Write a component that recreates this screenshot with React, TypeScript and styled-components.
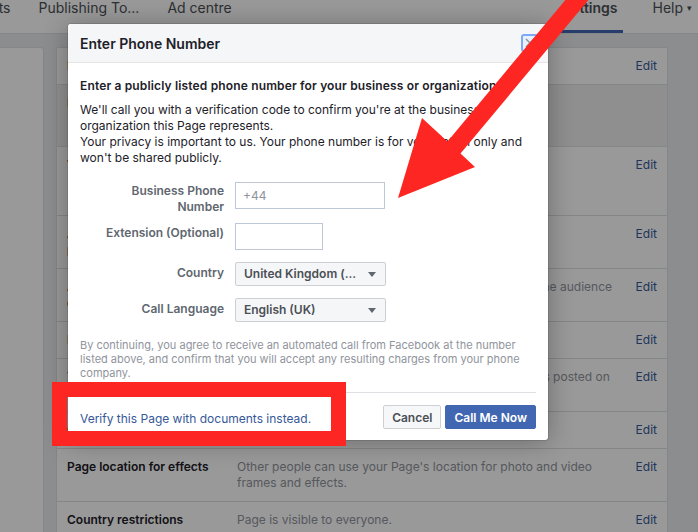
import styled, { createGlobalStyle } from 'styled-components';

const GlobalStyle = createGlobalStyle`
  * {
    box-sizing: border-box;
  }
  body {
    margin: 0;
    background: #e9ebee;
    font-family: Inter, 'Liberation Sans', Arial, sans-serif;
    color: #1d2129;
    overflow: hidden;
  }
`;

const sideItems = [
  'General',
  'Messaging',
  'Page info',
  'Templates',
  'Notifications',
  'Advanced',
  'Page roles',
  'People',
  'Audience',
  'Authorisations',
  'Branded content',
  'Instagram',
];

type Setting = {
  label: string;
  desc: string[];
  edit: boolean;
  shaded?: boolean;
  minH?: number;
};

// each desc entry is one line, as the page shows it
const settings: Setting[] = [
  { label: 'Page Visibility', desc: ['Page published'], edit: true },
  {
    label: 'Page Verification',
    desc: ['Page is not verified'],
    edit: false,
    shaded: true,
    minH: 62,
  },
  {
    label: 'Visitor posts',
    desc: [
      'Anyone can publish to the Page.',
      'Anyone can add photos and videos to the Page.',
      'Review posts by others before they are shown.',
    ],
    edit: true,
  },
  {
    label: 'Audience optimisation for posts',
    desc: ['The ability to select News Feed targeting', 'and publishing options is turned off.'],
    edit: true,
  },
  {
    label: 'Ads about social issues, elections or politics',
    desc: ['Choose if people who manage this Page can change the audience', 'for these ads.'],
    edit: true,
  },
  { label: 'Messages', desc: ['People can contact my Page privately.'], edit: true },
  {
    label: 'Tagging ability',
    desc: ['Only people who help manage my Page can tag photos posted on', 'it.'],
    edit: true,
  },
  {
    label: 'Others tagging this Page',
    desc: ['People and other Pages can tag my Page.'],
    edit: true,
  },
  {
    label: 'Page location for effects',
    desc: ["Other people can use your Page's location for photo and video", 'frames and effects.'],
    edit: true,
  },
  { label: 'Country restrictions', desc: ['Page is visible to everyone.'], edit: true },
];

const App = (): JSX.Element => {
  return (
    <>
      <GlobalStyle />
      <Page>
        <NavBar>
          <NavGroup>
            <NavTab>Insights</NavTab>
            <NavTab>Publishing To...</NavTab>
            <NavTab>Ad centre</NavTab>
          </NavGroup>
          <NavRight>
            <NavTab $active>Settings</NavTab>
            <NavTab>
              Help <Caret>▾</Caret>
            </NavTab>
          </NavRight>
        </NavBar>

        <Content>
          <SideCard>
            {sideItems.map((item) => (
              <SideItem key={item}>{item}</SideItem>
            ))}
          </SideCard>
          <MainCard>
            {settings.map((s) => (
              <SettingRow key={s.label} $shaded={s.shaded} $minH={s.minH}>
                <RowLabel>{s.label}</RowLabel>
                <RowDesc>
                  {s.desc.map((line) => (
                    <DescLine key={line}>{line}</DescLine>
                  ))}
                </RowDesc>
                <RowEdit>{s.edit ? 'Edit' : ''}</RowEdit>
              </SettingRow>
            ))}
          </MainCard>
        </Content>

        <Overlay />

        <Modal>
          <ModalHeader>
            <ModalTitle>Enter Phone Number</ModalTitle>
            <CloseBtn aria-label="Close">
              <svg width="10" height="10" viewBox="0 0 10 10">
                <path d="M1 1L9 9M9 1L1 9" stroke="#90949c" strokeWidth="1.6" />
              </svg>
            </CloseBtn>
          </ModalHeader>
          <ModalBody>
            <Intro>Enter a publicly listed phone number for your business or organization.</Intro>
            <Para>
              We'll call you with a verification code to confirm you're at the business or
              <br />
              organization this Page represents.
              <br />
              Your privacy is important to us. Your phone number is for verification only and
              <br />
              won't be shared publicly.
            </Para>

            <Form>
              <FieldLabel $top={1}>
                Business Phone
                <br />
                Number
              </FieldLabel>
              <TextInput $width={150} placeholder="+44" />

              <FieldLabel $top={2}>Extension (Optional)</FieldLabel>
              <TextInput $width={88} />

              <FieldLabel $top={7}>Country</FieldLabel>
              <SelectBox>
                United Kingdom (...
                <Arrow />
              </SelectBox>

              <FieldLabel $top={7}>Call Language</FieldLabel>
              <SelectBox>
                English (UK)
                <Arrow />
              </SelectBox>
            </Form>

            <Disclaimer>
              By continuing, you agree to receive an automated call from Facebook at the number
              listed above, and confirm that you will accept any resulting charges from your phone
              company.
            </Disclaimer>

            <Footer>
              <DocLink href="#">Verify this Page with documents instead.</DocLink>
              <Buttons>
                <Button>Cancel</Button>
                <Button $primary>Call Me Now</Button>
              </Buttons>
            </Footer>
          </ModalBody>
        </Modal>

        <Highlight />
        <ArrowMark viewBox="0 0 698 532">
          <polygon
            points="582,-20 605,-20 460.5,153.6 475,167 398,198 422,118 447.5,141.5"
            fill="#fe2622"
          />
        </ArrowMark>
      </Page>
    </>
  );
};

export default App;

const Page = styled.div`
  position: relative;
  width: 698px;
  height: 532px;
  overflow: hidden;
`;

const NavBar = styled.div`
  height: 34px;
  display: flex;
  background: #fff;
  border-bottom: 1px solid #dddfe2;
  padding-right: 6px;
`;

const NavGroup = styled.div`
  display: flex;
  gap: 28px;
  margin-left: -41px;
`;

const NavRight = styled.div`
  display: flex;
  gap: 30px;
  margin-left: auto;
`;

const NavTab = styled.div<{ $active?: boolean }>`
  height: 33px;
  padding: 0 ${(p) => (p.$active ? '5px' : '0')};
  font-size: 14px;
  line-height: 16px;
  color: #4b4f56;
  font-weight: ${(p) => (p.$active ? 600 : 400)};
  border-bottom: 3px solid ${(p) => (p.$active ? '#4267b2' : 'transparent')};
  white-space: nowrap;
`;

const Caret = styled.span`
  font-size: 9px;
  vertical-align: 2px;
`;

const Content = styled.div`
  display: flex;
  gap: 12px;
  padding-top: 13px;
`;

const SideCard = styled.div`
  flex-shrink: 0;
  width: 180px;
  margin-left: -136px;
  background: #fff;
  border: 1px solid #dddfe2;
  border-radius: 3px;
`;

const SideItem = styled.div`
  height: 40px;
  padding: 12px 10px;
  border-bottom: 1px solid #dddfe2;
  font-size: 12px;
  line-height: 16px;
  max-width: 120px;
  overflow: hidden;
  white-space: nowrap;
`;

const MainCard = styled.div`
  flex-shrink: 0;
  width: 612px;
  background: #fff;
  border: 1px solid #dddfe2;
  border-radius: 3px;
`;

const SettingRow = styled.div<{ $shaded?: boolean; $minH?: number }>`
  display: flex;
  min-height: ${(p) => (p.$minH ? `${p.$minH}px` : 'auto')};
  padding: 10px;
  border-top: 1px solid #dddfe2;
  background: ${(p) => (p.$shaded ? '#eeeff1' : '#fff')};
  font-size: 12px;
  line-height: 16px;

  &:first-child {
    border-top: none;
  }
`;

const RowLabel = styled.div`
  flex-shrink: 0;
  width: 170px;
  padding-right: 12px;
  font-weight: 600;
  color: #1d2129;
`;

const RowDesc = styled.div`
  flex: 1;
  min-width: 0;
  overflow: hidden;
  color: #90949c;
`;

const DescLine = styled.div`
  white-space: nowrap;
`;

const RowEdit = styled.div`
  flex-shrink: 0;
  width: 40px;
  text-align: right;
  color: #365899;
`;

const Overlay = styled.div`
  position: absolute;
  inset: 0;
  background: rgba(0, 0, 0, 0.4);
`;

const Modal = styled.div`
  position: absolute;
  top: 24px;
  left: 68px;
  width: 480px;
  background: #fff;
  border-radius: 3px;
  box-shadow: 0 2px 26px rgba(0, 0, 0, 0.3), 0 0 0 1px rgba(0, 0, 0, 0.1);
  overflow: hidden;
`;

const ModalHeader = styled.div`
  height: 39px;
  display: flex;
  align-items: center;
  justify-content: space-between;
  padding: 0 9px 0 12px;
  background: #f5f6f7;
  border-bottom: 1px solid #e5e5e5;
`;

const ModalTitle = styled.div`
  font-size: 14px;
  font-weight: 600;
  color: #1d2129;
`;

const CloseBtn = styled.button`
  width: 18px;
  height: 18px;
  padding: 0;
  display: flex;
  align-items: center;
  justify-content: center;
  background: #e8f0fe;
  border: 2px solid #7fa9f5;
  border-radius: 3px;
`;

const ModalBody = styled.div`
  padding: 15px 12px 0;
  font-size: 12px;
  line-height: 16px;
`;

const Intro = styled.p`
  margin: 0 0 8px;
  font-weight: 600;
  letter-spacing: 0.15px;
`;

const Para = styled.p`
  margin: 0;
  white-space: nowrap;
`;

const Form = styled.div`
  display: grid;
  grid-template-columns: 144px auto;
  column-gap: 11px;
  row-gap: 8px;
  justify-content: start;
  align-items: start;
  margin-top: 16px;
`;

const FieldLabel = styled.label<{ $top: number }>`
  padding-top: ${(p) => p.$top}px;
  text-align: right;
  font-weight: 600;
  color: #606770;
`;

const TextInput = styled.input<{ $width: number }>`
  width: ${(p) => p.$width}px;
  height: 27px;
  padding: 0 7px;
  border: 1px solid #bdc7d8;
  font-family: inherit;
  font-size: 12px;
  color: #1d2129;
  outline: none;

  &::placeholder {
    color: #90949c;
  }
`;

const SelectBox = styled.div`
  width: 151px;
  height: 24px;
  margin-top: 4px;
  display: flex;
  align-items: center;
  justify-content: space-between;
  padding: 0 9px 0 8px;
  background: #f5f6f7;
  border: 1px solid #ccd0d5;
  border-radius: 2px;
  font-weight: 600;
  color: #4b4f56;
  white-space: nowrap;
`;

const Arrow = styled.span`
  width: 0;
  height: 0;
  border-left: 4px solid transparent;
  border-right: 4px solid transparent;
  border-top: 5px solid #606770;
`;

const Disclaimer = styled.p`
  margin: 16px 0 0;
  font-size: 11px;
  line-height: 14px;
  color: #90949c;
`;

const Footer = styled.div`
  display: flex;
  align-items: center;
  justify-content: space-between;
  margin-top: 12px;
  padding: 12px 0 11px;
  border-top: 1px solid #dddfe2;
`;

const DocLink = styled.a`
  color: #365899;
  text-decoration: none;
  line-height: 20px;
  padding-top: 3px;
`;

const Buttons = styled.div`
  display: flex;
  gap: 4px;
`;

const Button = styled.button<{ $primary?: boolean }>`
  height: 24px;
  padding: 0 8px;
  font-family: inherit;
  font-size: 12px;
  font-weight: 600;
  border-radius: 2px;
  border: 1px solid ${(p) => (p.$primary ? '#4267b2' : '#ced0d4')};
  background: ${(p) => (p.$primary ? '#4267b2' : '#f6f7f9')};
  color: ${(p) => (p.$primary ? '#fff' : '#4b4f56')};
`;

const Highlight = styled.div`
  position: absolute;
  left: 52px;
  top: 382px;
  width: 294px;
  height: 64px;
  border: 15px solid #fe2622;
`;

const ArrowMark = styled.svg`
  position: absolute;
  inset: 0;
  width: 698px;
  height: 532px;
  overflow: visible;
  pointer-events: none;
`;
